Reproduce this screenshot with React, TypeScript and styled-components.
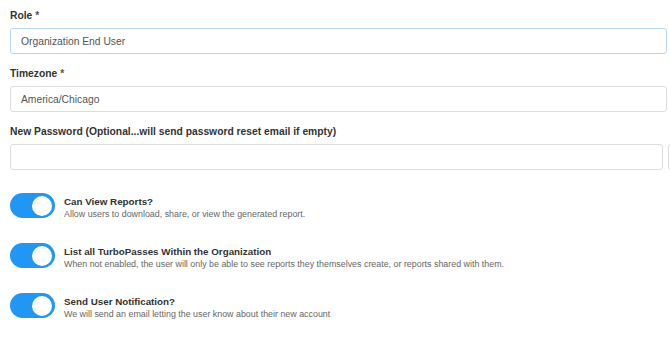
import styled, {createGlobalStyle} from "styled-components";

const GlobalStyle = createGlobalStyle`
    html {
        overflow: hidden;
    }
    body {
        margin: 0;
        padding: 0;
        background: #ffffff;
        font-family: "Liberation Sans", Arial, sans-serif;
    }
`

type ToggleItem = {
    title: string
    text: string
}

const toggles: ToggleItem[] = [
    {title: "Can View Reports?", text: "Allow users to download, share, or view the generated report."},
    {
        title: "List all TurboPasses Within the Organization",
        text: "When not enabled, the user will only be able to see reports they themselves create, or reports shared with them."
    },
    {title: "Send User Notification?", text: "We will send an email letting the user know about their new account"},
]

const App = () => {
    return (
        <>
            <GlobalStyle/>
            <Form>
                <Field>
                    <Label>Role <Req>*</Req></Label>
                    <Input focused={true}>Organization End User</Input>
                </Field>
                <Field>
                    <Label>Timezone <Req>*</Req></Label>
                    <Input>America/Chicago</Input>
                </Field>
                <Field>
                    <Label>New Password (Optional...will send password reset email if empty)</Label>
                    <PasswordRow>
                        <PasswordInput/>
                        <AddonButton/>
                    </PasswordRow>
                </Field>
                <ToggleList>
                    {toggles.map(t => (
                        <ToggleRow key={t.title}>
                            <Switch>
                                <Knob/>
                            </Switch>
                            <ToggleText>
                                <ToggleTitle>{t.title}</ToggleTitle>
                                <ToggleDesc>{t.text}</ToggleDesc>
                            </ToggleText>
                        </ToggleRow>
                    ))}
                </ToggleList>
            </Form>
        </>
    );
};

export default App;

const Form = styled.div`
    width: 657px;
    padding: 10px 0 20px 10px;
    display: flex;
    flex-direction: column;
    gap: 14px;
`

const Field = styled.div`
    display: flex;
    flex-direction: column;
    gap: 6px;
`

const Label = styled.label`
    font: 700 10.3px/12px "Liberation Sans", Arial, sans-serif;
    color: #333333;
`

const Req = styled.span`
    color: #555555;
`

const Input = styled.div<{ focused?: boolean }>`
    box-sizing: border-box;
    height: 26px;
    padding: 0 10px;
    display: flex;
    align-items: center;
    border: 1px solid ${props => props.focused ? "#b9d7f0" : "#dddddd"};
    border-radius: 3px;
    font: 400 10.3px "Liberation Sans", Arial, sans-serif;
    color: #555555;
    background: #ffffff;
`

const PasswordRow = styled.div`
    display: flex;
    gap: 5px;
    width: 700px;
`

const PasswordInput = styled(Input)`
    width: 653px;
    flex-shrink: 0;
`

const AddonButton = styled.div`
    width: 40px;
    height: 26px;
    box-sizing: border-box;
    border: 1px solid #dddddd;
    border-radius: 3px;
    flex-shrink: 0;
`

const ToggleList = styled.div`
    display: flex;
    flex-direction: column;
    gap: 25px;
    margin-top: 9px;
`

const ToggleRow = styled.div`
    display: flex;
    align-items: flex-start;
    gap: 9px;
    height: 25px;
`

const Switch = styled.div`
    width: 45px;
    height: 25px;
    border-radius: 13px;
    background: #2196f3;
    display: flex;
    align-items: center;
    justify-content: flex-end;
    padding-right: 3px;
    box-sizing: border-box;
    flex-shrink: 0;
`

const Knob = styled.div`
    width: 20px;
    height: 20px;
    border-radius: 50%;
    background: #ffffff;
`

const ToggleText = styled.div`
    display: flex;
    flex-direction: column;
    padding-top: 2px;
`

const ToggleTitle = styled.span`
    font: 700 9.8px/13px "Liberation Sans", Arial, sans-serif;
    color: #333333;
`

const ToggleDesc = styled.span`
    font: 400 8.9px/12px "Liberation Sans", Arial, sans-serif;
    color: #666666;
`
